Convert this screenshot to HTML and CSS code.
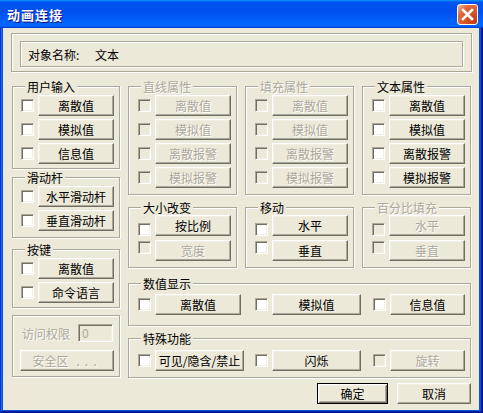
FILE: index.html
```html
<!DOCTYPE html>
<html lang="zh-CN">
<head>
<meta charset="utf-8">
<title>动画连接</title>
<link rel="stylesheet" href="styles.css">
</head>
<body>
<div class="window">
  <div class="titlebar">
    <span class="title">动画连接</span>
    <button class="close" aria-label="关闭">
      <svg width="13" height="13" viewBox="0 0 13 13"><path d="M2 2 L11 11 M11 2 L2 11" stroke="#fff" stroke-width="2.6" stroke-linecap="square" fill="none"/></svg>
    </button>
  </div>
  <div class="client">
    <div class="objbox">
      <div class="objinner"><span class="objlabel">对象名称:</span><span>文本</span></div>
    </div>
    <div class="main">
      <div class="leftcol">
        <div class="group g-user">
          <span class="legend">用户输入</span>
          <div class="rows">
            <div class="row"><span class="cb"></span><button class="btn">离散值</button></div>
            <div class="row"><span class="cb"></span><button class="btn">模拟值</button></div>
            <div class="row"><span class="cb"></span><button class="btn">信息值</button></div>
          </div>
        </div>
        <div class="group g-slider">
          <span class="legend">滑动杆</span>
          <div class="rows">
            <div class="row"><span class="cb"></span><button class="btn">水平滑动杆</button></div>
            <div class="row"><span class="cb"></span><button class="btn">垂直滑动杆</button></div>
          </div>
        </div>
        <div class="group g-key">
          <span class="legend">按键</span>
          <div class="rows">
            <div class="row"><span class="cb"></span><button class="btn">离散值</button></div>
            <div class="row"><span class="cb"></span><button class="btn">命令语言</button></div>
          </div>
        </div>
        <div class="group g-access is-disabled">
          <div class="access-row"><span class="dis-text">访问权限</span><span class="field">0</span></div>
          <button class="btn btn-safe">安全区<span class="dots">...</span></button>
        </div>
      </div>
      <div class="rightarea">
        <div class="group g-four is-disabled">
          <span class="legend">直线属性</span>
          <div class="rows">
            <div class="row"><span class="cb"></span><button class="btn">离散值</button></div>
            <div class="row"><span class="cb"></span><button class="btn">模拟值</button></div>
            <div class="row"><span class="cb"></span><button class="btn">离散报警</button></div>
            <div class="row"><span class="cb"></span><button class="btn">模拟报警</button></div>
          </div>
        </div>
        <div class="group g-four is-disabled">
          <span class="legend">填充属性</span>
          <div class="rows">
            <div class="row"><span class="cb"></span><button class="btn">离散值</button></div>
            <div class="row"><span class="cb"></span><button class="btn">模拟值</button></div>
            <div class="row"><span class="cb"></span><button class="btn">离散报警</button></div>
            <div class="row"><span class="cb"></span><button class="btn">模拟报警</button></div>
          </div>
        </div>
        <div class="group g-four">
          <span class="legend">文本属性</span>
          <div class="rows">
            <div class="row"><span class="cb"></span><button class="btn">离散值</button></div>
            <div class="row"><span class="cb"></span><button class="btn">模拟值</button></div>
            <div class="row"><span class="cb"></span><button class="btn">离散报警</button></div>
            <div class="row"><span class="cb"></span><button class="btn">模拟报警</button></div>
          </div>
        </div>

        <div class="group g-two">
          <span class="legend">大小改变</span>
          <div class="rows">
            <div class="row row-a"><span class="cb"></span><button class="btn">按比例</button></div>
            <div class="row row-b is-disabled"><span class="cb"></span><button class="btn">宽度</button></div>
          </div>
        </div>
        <div class="group g-two">
          <span class="legend">移动</span>
          <div class="rows">
            <div class="row row-a"><span class="cb"></span><button class="btn">水平</button></div>
            <div class="row row-b"><span class="cb"></span><button class="btn">垂直</button></div>
          </div>
        </div>
        <div class="group g-two is-disabled">
          <span class="legend">百分比填充</span>
          <div class="rows">
            <div class="row row-a"><span class="cb"></span><button class="btn">水平</button></div>
            <div class="row row-b"><span class="cb"></span><button class="btn">垂直</button></div>
          </div>
        </div>

        <div class="group g-wide g-value">
          <span class="legend">数值显示</span>
          <div class="trio">
            <div class="row"><span class="cb"></span><button class="btn w86">离散值</button></div>
            <div class="row"><span class="cb"></span><button class="btn w89">模拟值</button></div>
            <div class="row"><span class="cb"></span><button class="btn w75">信息值</button></div>
          </div>
        </div>

        <div class="group g-wide g-special">
          <span class="legend">特殊功能</span>
          <div class="trio">
            <div class="row"><span class="cb"></span><button class="btn w89">可见/隐含/禁止</button></div>
            <div class="row"><span class="cb"></span><button class="btn w89">闪烁</button></div>
            <div class="row is-disabled"><span class="cb"></span><button class="btn w75">旋转</button></div>
          </div>
        </div>

        <div class="actions">
          <button class="btn btn-default">确定</button>
          <button class="btn btn-cancel">取消</button>
        </div>
      </div>
    </div>
  </div>
</div>
</body>
</html>
```
FILE: styles.css
```css
* { box-sizing: border-box; }
html, body { margin: 0; padding: 0; }
body {
  width: 483px;
  height: 413px;
  overflow: hidden;
  font-family: "Noto Sans CJK SC", "Liberation Sans", sans-serif;
  font-size: 12px;
  color: #000;
}

.window {
  width: 483px;
  height: 413px;
  display: flex;
  flex-direction: column;
  padding: 0 4px 3px 3px;
  background: #0855dd;
  box-shadow: inset 1px 0 #0831d9, inset -1px -1px #00138c, inset -2px -2px #001ea0, inset 2px 0 #166aee;
}

.titlebar {
  flex: none;
  height: 28px;
  margin: 0 -4px 0 -3px;
  padding: 0 5px 0 7px;
  display: flex;
  align-items: center;
  justify-content: space-between;
  background: linear-gradient(180deg, #0997ff, #0053ee 8%, #0050ee 40%, #06f 88%, #06f 93%, #005bff 95%, #003dd7 96%, #003dd7);
}
.title {
  color: #fff;
  font-weight: bold;
  font-size: 13px;
  letter-spacing: 1px;
  text-shadow: 1px 1px #0f1089;
}
.close {
  width: 21px;
  height: 21px;
  padding: 0;
  display: flex;
  align-items: center;
  justify-content: center;
  border: 1px solid #fff;
  border-radius: 3px;
  background: radial-gradient(circle at 85% 85%, #c23c12 0, #dc5a2c 50%, #e26a3e 70%, #f0a98c 92%, #fff 100%);
}

.client {
  flex: 1;
  background: #ece9d8;
  padding: 5px 0 0 8px;
}

.objbox {
  width: 461px;
  height: 39px;
  padding: 7px 0 0 8px;
  border: 1px solid #aca899;
  box-shadow: inset 1px 1px #fff, 1px 1px #fff;
}
.objinner {
  width: 443px;
  height: 26px;
  padding-left: 7px;
  display: flex;
  align-items: center;
  border: 1px solid #aca899;
  box-shadow: inset 1px 1px #fff, 1px 1px #fff;
}
.objlabel { width: 67px; }

.main {
  display: flex;
  gap: 8px;
  margin-top: 14px;
  padding-left: 1px;
}
.leftcol {
  width: 108px;
  display: flex;
  flex-direction: column;
}
.rightarea {
  width: 343px;
  display: grid;
  grid-template-columns: 109px 109px 109px;
  column-gap: 8px;
  align-content: start;
}

.group {
  border: 1px solid #aca899;
  box-shadow: inset 1px 1px #fff, 1px 1px #fff;
  padding: 0 0 5px 8px;
}
.rightarea .group { padding-left: 9px; }
.legend {
  display: block;
  width: max-content;
  height: 13px;
  line-height: 13px;
  margin: -7px 0 0 4px;
  padding: 0 2px;
  background: #ece9d8;
}
.rightarea .legend { margin-left: 3px; }
.rows {
  display: flex;
  flex-direction: column;
  gap: 3px;
  margin-top: 2px;
}
.row {
  display: flex;
  align-items: center;
  gap: 4px;
}

.cb {
  flex: none;
  width: 13px;
  height: 13px;
  background: #fff;
  border: 1px solid;
  border-color: #aca899 #fff #fff #aca899;
  box-shadow: inset 1px 1px #716f64, inset -1px -1px #f1efe2;
}

.btn {
  flex: none;
  width: 76px;
  height: 21px;
  padding: 0;
  display: flex;
  align-items: center;
  justify-content: center;
  font: inherit;
  line-height: 1;
  color: #000;
  background: #ece9d8;
  border: 1px solid;
  border-color: #fff #716f64 #716f64 #fff;
  box-shadow: inset -1px -1px #aca899, inset 1px 1px #f1efe2;
}
.w75 { width: 75px; }
.w86 { width: 86px; }
.w89 { width: 89px; }

.is-disabled .legend,
.is-disabled .btn,
.dis-text {
  color: #aca899;
  text-shadow: 1px 1px #fff;
}
.is-disabled .cb { background: #ece9d8; }

/* left column groups */
.g-user { padding-bottom: 4px; }
.g-slider { margin-top: 8px; padding-bottom: 6px; }
.g-key { margin-top: 11px; padding-bottom: 4px; }
.g-access { margin-top: 7px; padding: 8px 0 5px 8px; }
.access-row {
  display: flex;
  align-items: center;
  gap: 8px;
  padding-left: 1px;
}
.field {
  width: 35px;
  height: 18px;
  padding-left: 3px;
  line-height: 16px;
  color: #aca899;
  background: #ece9d8;
  border: 1px solid;
  border-color: #aca899 #fff #fff #aca899;
  box-shadow: inset 1px 1px #716f64, inset -1px -1px #f1efe2;
}
.btn-safe {
  width: 94px;
  margin: 8px 0 0 -1px;
}
.dots {
  margin-left: 8px;
  letter-spacing: 5px;
}

/* right area groups */
.g-four { padding-bottom: 6px; }
.g-two { margin-top: 12px; padding-bottom: 6px; }
.g-two .rows { gap: 4px; margin-top: 1px; }
.g-two .row { align-items: flex-start; }
.g-two .row-a .cb { margin-top: 8px; }
.g-two .row-b .cb { margin-top: 1px; }

.g-wide { grid-column: 1 / -1; }
.trio {
  display: grid;
  grid-template-columns: 117px 118px auto;
}
.g-value { margin-top: 15px; padding-bottom: 10px; }
.g-value .trio { margin-top: 4px; }
.g-special { margin-top: 12px; padding-bottom: 6px; }
.g-special .trio { margin-top: 5px; }

.actions {
  grid-column: 1 / -1;
  display: flex;
  justify-content: flex-end;
  gap: 9px;
  margin-top: 5px;
}
.btn-default {
  width: 71px;
  border: 1px solid #000;
  box-shadow: inset 1px 1px #fff, inset -1px -1px #716f64, inset 2px 2px #f1efe2, inset -2px -2px #aca899;
}
.btn-cancel { width: 74px; }
```
